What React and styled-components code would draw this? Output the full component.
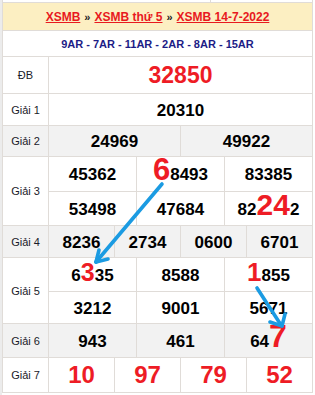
import React from "react";
import styled, { createGlobalStyle } from "styled-components";

const GlobalStyle = createGlobalStyle`
  body {
    margin: 0;
    background: #fff;
    font-family: "Liberation Sans", Arial, sans-serif;
  }
`;

const LINE = "#e0dcd8";
const GREY = "#f2f2f2";
const RED = "#ee1c25";

const rows = [
  { label: "ĐB", cols: 1, heights: [36], bg: "#fff", size: 23, red: true, nums: ["32850"] },
  { label: "Giải 1", cols: 1, heights: [31], bg: "#fff", nums: ["20310"] },
  { label: "Giải 2", cols: 2, heights: [30], bg: GREY, nums: ["24969", "49922"] },
  {
    label: "Giải 3",
    cols: 3,
    heights: [34, 33],
    bg: "#fff",
    nums: [
      "45362",
      [{ hl: "6", size: 31 }, "8493"],
      "83385",
      "53498",
      "47684",
      ["82", { hl: "24", size: 30 }, "2"],
    ],
  },
  { label: "Giải 4", cols: 4, heights: [31], bg: GREY, nums: ["8236", "2734", "0600", "6701"] },
  {
    label: "Giải 5",
    cols: 3,
    heights: [33, 31],
    bg: "#fff",
    nums: [
      ["6", { hl: "3", size: 25 }, "35"],
      "8588",
      [{ hl: "1", size: 26 }, "855"],
      "3212",
      "9001",
      "5671",
    ],
  },
  {
    label: "Giải 6",
    cols: 3,
    heights: [33],
    bg: GREY,
    nums: ["943", "461", ["64", { hl: "7", size: 32 }]],
  },
  { label: "Giải 7", cols: 4, heights: [34], bg: "#fff", size: 24, red: true, nums: ["10", "97", "79", "52"] },
];

const App = () => {
  return (
    <Page>
      <GlobalStyle />
      <Board>
        <Stub>
          <div />
        </Stub>
        <Header>
          <a href="#xsmb">XSMB</a>
          <Sep>»</Sep>
          <a href="#thu5">XSMB thứ 5</a>
          <Sep>»</Sep>
          <a href="#ngay">XSMB 14-7-2022</a>
        </Header>
        <Codes>9AR - 7AR - 11AR - 2AR - 8AR - 15AR</Codes>
        {rows.map((row) => (
          <Row key={row.label} $bg={row.bg}>
            <Label>{row.label}</Label>
            <Cells $cols={row.cols} $heights={row.heights}>
              {row.nums.map((n, i) => (
                <Cell key={i} $bg={row.bg} $size={row.size} $red={row.red}>
                  <Num>
                    {Array.isArray(n)
                      ? n.map((part, j) =>
                          typeof part === "string" ? (
                            part
                          ) : (
                            <Hl key={j} $size={part.size}>
                              {part.hl}
                            </Hl>
                          )
                        )
                      : n}
                  </Num>
                </Cell>
              ))}
            </Cells>
          </Row>
        ))}
      </Board>
      <Arrows width="315" height="395" viewBox="0 0 315 395">
        <g fill="none" stroke="#1b9be2" strokeWidth="3.6" strokeLinecap="round" strokeLinejoin="round">
          <path d="M160 184 Q128 222 94 262" />
          <path d="M94 262 L97 250" />
          <path d="M94 262 L106 259" />
          <path d="M255 288 Q266 305 279 325" />
          <path d="M280 326 L268 322" />
          <path d="M280 326 L283 314" />
        </g>
      </Arrows>
    </Page>
  );
};

const Page = styled.div`
  position: relative;
  width: 315px;
  height: 395px;
  overflow: hidden;
  border-left: 2px solid #ececec;
  box-sizing: border-box;
`;

const Board = styled.div`
  width: 311px;
  box-sizing: border-box;
  border: 1px solid ${LINE};
  border-top: none;
  background: #fff;
`;

const Stub = styled.div`
  height: 2px;
  border-bottom: 1px solid ${LINE};
  div {
    width: 207px;
    height: 100%;
    border-right: 1px solid ${LINE};
  }
`;

const Header = styled.div`
  height: 27px;
  display: flex;
  align-items: center;
  justify-content: center;
  gap: 4px;
  background: #fcefc2;
  border-bottom: 1px solid ${LINE};
  font-size: 12px;
  font-weight: bold;
  a {
    color: #e8191e;
    text-decoration: underline;
  }
`;

const Sep = styled.span`
  color: #222;
  font-size: 11px;
`;

const Codes = styled.div`
  height: 25px;
  display: flex;
  align-items: center;
  justify-content: center;
  border-bottom: 1px solid ${LINE};
  color: #1c1c86;
  font-size: 11px;
  font-weight: bold;
`;

const Row = styled.div`
  display: grid;
  grid-template-columns: 46px 1fr;
  border-bottom: 1px solid ${LINE};
  background: ${(p) => p.$bg};
  &:last-child {
    border-bottom: none;
  }
`;

const Label = styled.div`
  display: flex;
  align-items: center;
  justify-content: center;
  border-right: 1px solid ${LINE};
  font-size: 11px;
  color: #1a1a2a;
`;

const Cells = styled.div`
  display: grid;
  grid-template-columns: repeat(${(p) => p.$cols}, 1fr);
  grid-template-rows: ${(p) => p.$heights.map((h) => `${h}px`).join(" ")};
  gap: 1px;
  background: ${LINE};
`;

const Cell = styled.div`
  display: flex;
  align-items: center;
  justify-content: center;
  padding-top: ${(p) => (p.$size ? 0 : 1)}px;
  box-sizing: border-box;
  background: ${(p) => p.$bg};
  font-size: ${(p) => p.$size || 17}px;
  font-weight: bold;
  color: ${(p) => (p.$red ? RED : "#000")};
`;

const Num = styled.span`
  line-height: 1;
`;

const Hl = styled.span`
  font-size: ${(p) => p.$size}px;
  color: ${RED};
  line-height: 0;
`;

const Arrows = styled.svg`
  position: absolute;
  left: 0;
  top: 0;
  pointer-events: none;
`;

export default App;
